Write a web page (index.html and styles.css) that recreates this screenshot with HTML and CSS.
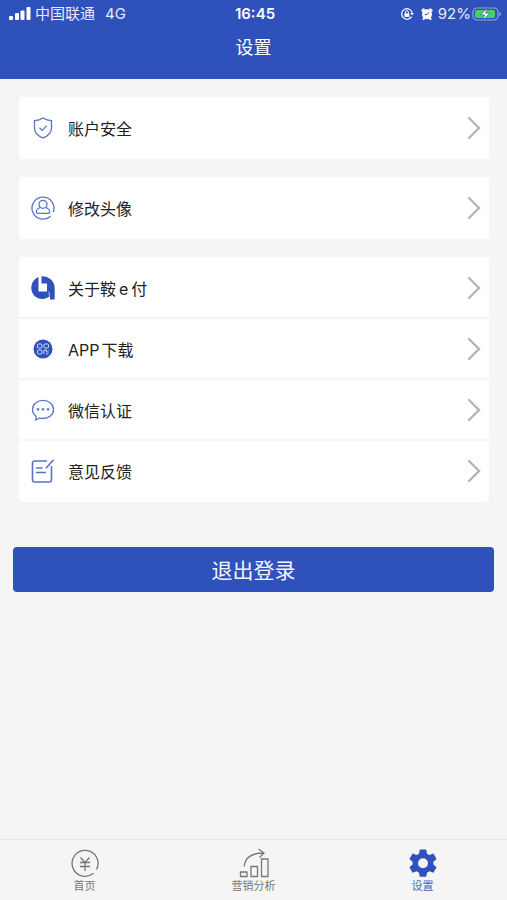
FILE: index.html
```html
<!DOCTYPE html>
<html lang="zh-CN">
<head>
    <meta charset="UTF-8">
    <meta name="viewport" content="width=device-width, initial-scale=1.0">
    <title>设置</title>
    <link rel="stylesheet" href="styles.css">
</head>
<body>

<header>
    <div class="status-bar">
        <div class="status-left">
            <svg class="signal" viewBox="0 0 22 14" width="22" height="14" fill="#fff">
                <rect x="0" y="9" width="4" height="4" rx="1"/>
                <rect x="6" y="6" width="4" height="7" rx="1"/>
                <rect x="11.500" y="3.500" width="4" height="9.500" rx="1"/>
                <rect x="17.500" y="0" width="4" height="13" rx="1"/>
            </svg>
            <span>中国联通</span>
            <span class="network">4G</span>
        </div>
        <div class="clock">16:45</div>
        <div class="status-right">
            <svg viewBox="0 0 14 14" width="14" height="14" fill="none" stroke="#fff">
                <path d="M11.6 9.6A5.3 5.3 0 1 1 12.2 6" stroke-width="1.2"/>
                <path d="M10.4 6h3.4l-1.7 2.6z" fill="#fff" stroke="none"/>
                <rect x="4.4" y="6.3" width="5" height="3.6" fill="#fff" stroke="none"/>
                <path d="M5.4 6.5V5.2a1.5 1.5 0 0 1 3 0v1.3"/>
            </svg>
            <svg class="alarm" viewBox="0 0 14 14" width="14" height="14">
                <path d="M2.4 3.6 3.8 2.4M11.6 3.6 10.2 2.4M3.5 12l.8-1M10.5 12l-.8-1" stroke="#fff" stroke-width="2.2" stroke-linecap="round"/>
                <circle cx="7" cy="7.3" r="5" fill="#fff"/>
                <path d="M9 5.200 7 7.600H4.600" fill="none" stroke="#2e51bb"/>
            </svg>
            <span>92%</span>
            <svg class="battery" viewBox="0 0 29 14" width="29" height="14">
                <rect x="1" y="1" width="25" height="12" rx="4" fill="none" stroke="#8fa2dd" stroke-width="1.2"/>
                <rect x="3" y="3" width="20" height="8" rx="2" fill="#3fd35f"/>
                <path d="M27.5 5v4c2-.6 2-3.400 0-4z" fill="#8fa2dd"/>
                <path d="M15.5 1.2 8.6 7.800h4L10.8 13l7-6.800h-4z" fill="#fff" stroke="#2e51bb" stroke-width=".6"/>
            </svg>
        </div>
    </div>
    <h1>设置</h1>
</header>

<main>
    <nav class="card">
        <a class="row" href="#security">
            <svg class="icon" viewBox="0 0 24 24">
                <path d="M12 2c2.400 1.700 5 2.500 8.500 2.600v7.400c0 4.600-3.400 8-8.500 9.800-5.100-1.800-8.500-5.200-8.500-9.800V4.600c3.500-.1 6.100-.9 8.500-2.600z"/>
                <path d="m8.500 11.700 2.700 2.700 4.600-4.800"/>
            </svg>
            <span class="label">账户安全</span>
            <svg class="arrow" viewBox="0 0 14 24"><path d="M2 2l10 10L2 22"/></svg>
        </a>
    </nav>

    <nav class="card">
        <a class="row" href="#avatar">
            <svg class="icon" viewBox="0 0 24 24">
                <path d="M19.500 20.200A11 11 0 1 1 22.300 16M19.500 20.200l-1 .8"/>
                <circle cx="12" cy="8.300" r="4"/>
                <path d="M9.300 11.500c-2.600.8-4 2.600-4 4.500 0 .8.400 1.300 1.200 1.300h11c.8 0 1.200-.5 1.200-1.300 0-1.900-1.400-3.700-4-4.500"/>
            </svg>
            <span class="label">修改头像</span>
            <svg class="arrow" viewBox="0 0 14 24"><path d="M2 2l10 10L2 22"/></svg>
        </a>
    </nav>

    <nav class="card">
        <a class="row" href="#about">
            <svg class="icon solid" viewBox="0 0 24 24">
                <path d="M7.500.9V15.500H16V7.500h-5.500V.3C18 .2 23.700 5 23.700 12v11.500h-4.800V20C11.500 26.500.3 21.500.3 12 .3 7 3.200 2.700 7.500.9z"/>
                <path d="M18.500 20 17.800 15.500" stroke="#fff" stroke-width=".6"/>
            </svg>
            <span class="label">关于鞍<span class="latin">e</span>付</span>
            <svg class="arrow" viewBox="0 0 14 24"><path d="M2 2l10 10L2 22"/></svg>
        </a>
        <a class="row" href="#download">
            <svg class="icon" viewBox="0 0 24 24">
                <circle cx="12" cy="12" r="9.500" fill="#2e51bb" stroke="none"/>
                <g stroke="#c9d4f5" stroke-width="1">
                    <rect x="6.500" y="7" width="4.500" height="4" rx="1"/>
                    <rect x="13" y="7" width="4.500" height="4" rx="1"/>
                    <rect x="6.500" y="13" width="4.500" height="4" rx="1"/>
                    <path d="M13 17v-4h2.500v2h2M17.500 13v.5M15 17h2.500"/>
                </g>
            </svg>
            <span class="label"><span class="app">APP</span>下载</span>
            <svg class="arrow" viewBox="0 0 14 24"><path d="M2 2l10 10L2 22"/></svg>
        </a>
        <a class="row" href="#wechat">
            <svg class="icon" viewBox="0 0 24 24">
                <path d="M5 18.200C2.600 16.500 1.500 14.200 1.500 11.500c0-5.300 4.700-9.200 10.500-9.200s10.500 3.900 10.500 9.200-4.700 9-10.500 9c-1.300 0-2.400-.1-3.500-.5L4.800 22z"/>
                <path d="M5.800 11.400h2.400M10.800 11.400h2.400M15.800 11.400h2.400" stroke-width="2.400"/>
            </svg>
            <span class="label">微信认证</span>
            <svg class="arrow" viewBox="0 0 14 24"><path d="M2 2l10 10L2 22"/></svg>
        </a>
        <a class="row" href="#feedback">
            <svg class="icon pen" viewBox="0 0 24 24">
                <path d="M16 2H3.500a2 2 0 0 0-2 2v17a2 2 0 0 0 2 2h15a2 2 0 0 0 2-2V7"/>
                <path d="M22.500.800 15 9.300M5 9h6.500M5 13.500h10"/>
            </svg>
            <span class="label">意见反馈</span>
            <svg class="arrow" viewBox="0 0 14 24"><path d="M2 2l10 10L2 22"/></svg>
        </a>
    </nav>

    <button type="button" class="logout-btn">退出登录</button>
</main>

<footer>
    <a class="tab" href="#home">
        <svg viewBox="0 0 30 30" width="30" height="30">
            <path d="M23.500 25.200A13 13 0 1 1 26.500 21.500"/>
            <path d="M10.500 9.500 15 14.500l4.500-5M15 14.500V23M10 14.500h10M10 18.500h10"/>
        </svg>
        <span>首页</span>
    </a>
    <a class="tab" href="#marketing">
        <svg viewBox="0 0 30 30" width="30" height="30">
            <path d="M1.500 24h6.500v4.500H1.500zM12 18.500h6.500v10H12zM22.500 11H29v17.500h-6.500z"/>
            <path d="M5 18.500C6 10 12.500 5 24.500 5M19.500 1l5.500 4-4.500 4.500"/>
        </svg>
        <span>营销分析</span>
    </a>
    <a class="tab active" href="#settings">
        <svg viewBox="0 0 30 30" width="30" height="30">
            <path fill-rule="evenodd" d="M11.800 1.500h6.400l.8 4.200 2.400 1.400 4-1.500 3.200 5.500-3.200 2.700v2.800l3.200 2.700-3.200 5.500-4-1.500-2.400 1.400-.8 4.100h-6.400l-.8-4.100-2.400-1.400-4 1.500-3.200-5.500 3.200-2.700v-2.800l-3.200-2.700 3.200-5.500 4 1.500L11 5.700zM15 10.200a5 5 0 1 0 0 10 5 5 0 0 0 0-10z"/>
        </svg>
        <span>设置</span>
    </a>
</footer>

</body>
</html>
```

FILE: styles.css
```css
* {
    margin: 0;
    padding: 0;
    box-sizing: border-box;
}

body {
    display: flex;
    flex-direction: column;
    min-height: 100vh;
    background: #f5f5f5;
    color: #222;
    font-family: Inter, "Noto Sans CJK SC", sans-serif;
    font-size: 16px;
}

a {
    color: inherit;
    text-decoration: none;
}

header {
    height: 79px;
    background: #2e51bb;
    color: #fff;
}

.status-bar {
    display: grid;
    grid-template-columns: 1fr auto 1fr;
    align-items: center;
    height: 28px;
    padding: 0 6px 0 9px;
    font-size: 15px;
    line-height: 28px;
}

.status-left,
.status-right {
    display: flex;
    align-items: center;
    color: #e6ebfa;
}

.status-left {
    gap: 4px;
}

.network {
    margin-left: 6px;
}

.clock {
    font-weight: 600;
}

.status-right {
    justify-content: flex-end;
}

.alarm {
    margin: 0 4px 0 6px;
}

.battery {
    margin-left: 1px;
}

h1 {
    font-size: 18px;
    font-weight: 400;
    line-height: 40px;
    text-align: center;
}

main {
    flex: 1;
    padding: 18px 13px;
}

.card {
    margin: 0 5px 18px 6px;
    padding-top: 1px;
    border-radius: 4px;
    background: #fff;
}

.row {
    display: flex;
    align-items: center;
    height: 61px;
    padding: 0 8px 0 12px;
    border-bottom: 2px solid #f5f5f5;
}

.row:last-child {
    border-bottom-color: transparent;
}

.icon {
    width: 24px;
    height: 24px;
    fill: none;
    stroke: #5874c8;
    stroke-width: 1.3;
}

.icon.solid {
    fill: #2e51bb;
    stroke: none;
}

.icon.pen {
    stroke-width: 1.6;
}

.label {
    flex: 1;
    margin-left: 13px;
}

.latin {
    margin: 0 3px;
}

.app {
    margin-right: 2px;
}

.arrow {
    width: 14px;
    height: 24px;
    fill: none;
    stroke: #b5b5b5;
    stroke-width: 2.4;
    stroke-linecap: round;
}

.logout-btn {
    display: block;
    width: 100%;
    height: 45px;
    margin-top: 45px;
    padding-bottom: 2px;
    border: none;
    border-radius: 4px;
    background: #2e51bb;
    color: #f1f4fd;
    font-family: inherit;
    font-size: 21px;
    cursor: pointer;
}

footer {
    display: flex;
    height: 61px;
    border-top: 1px solid #e6e6e6;
}

.tab {
    flex: 1;
    display: flex;
    flex-direction: column;
    align-items: center;
    padding-top: 8px;
    color: #777;
    font-size: 11px;
    line-height: 16px;
}

.tab svg {
    fill: none;
    stroke: #777;
    stroke-width: 1.3;
}

.tab.active {
    color: #4a67c3;
}

.tab.active svg {
    fill: #2e51bb;
    stroke: none;
}
```
